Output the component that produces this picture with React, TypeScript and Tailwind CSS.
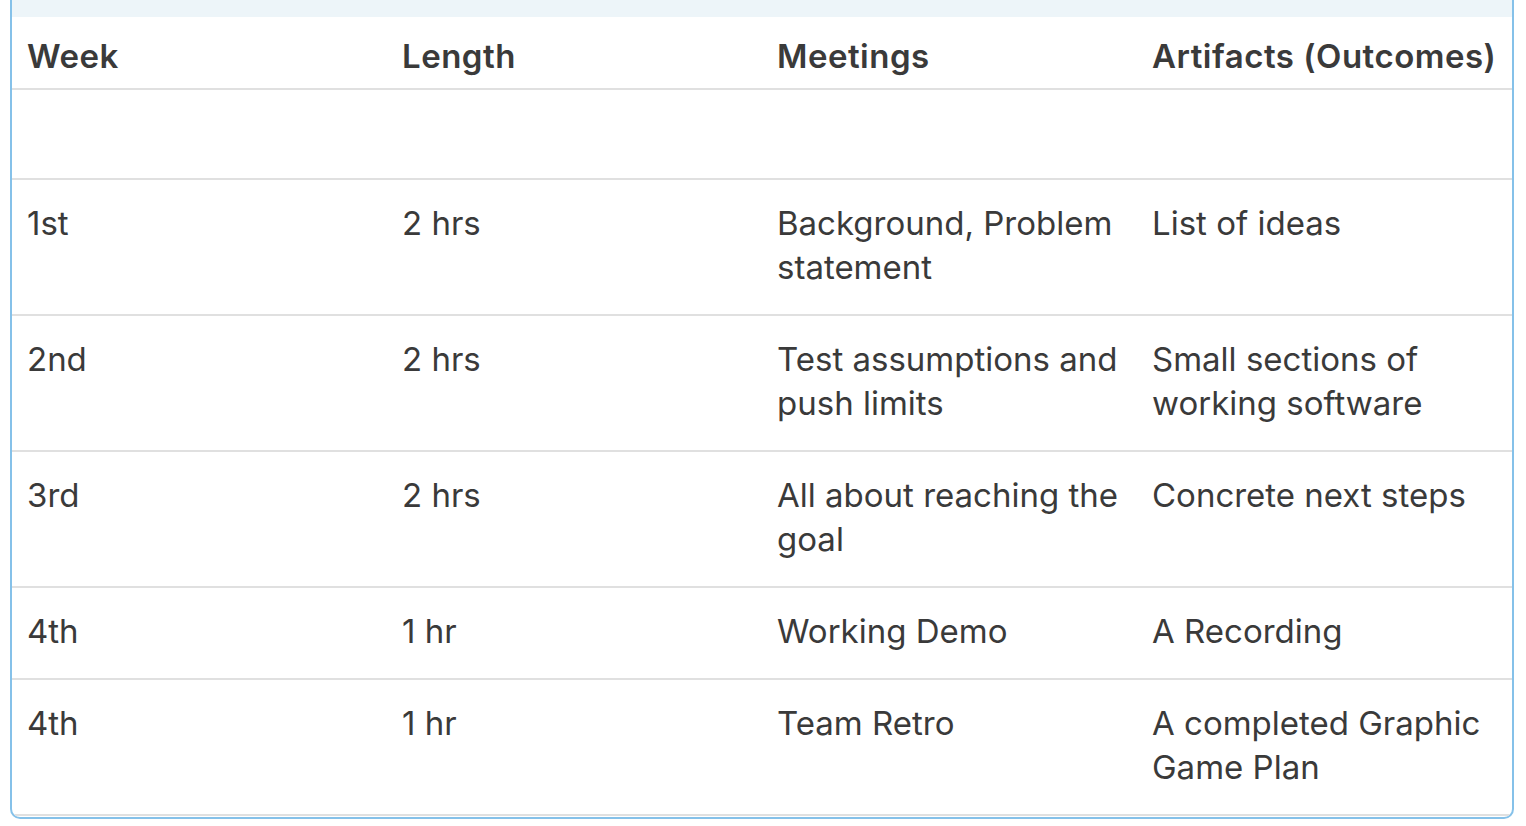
import React from "react";

const rows: [string, string, string, string][] = [
  ["1st", "2 hrs", "Background, Problem statement", "List of ideas"],
  ["2nd", "2 hrs", "Test assumptions and push limits", "Small sections of working software"],
  ["3rd", "2 hrs", "All about reaching the goal", "Concrete next steps"],
  ["4th", "1 hr", "Working Demo", "A Recording"],
  ["4th", "1 hr", "Team Retro", "A completed Graphic Game Plan"],
];

export default function App() {
  return (
    <div className="w-[1526px] h-[826px] bg-white" style={{ fontFamily: "Inter, 'Noto Sans', sans-serif" }}>
      <div className="ml-[10px] w-[1504px] border-x-2 border-b-2 border-[#85c1e9] rounded-b-[10px] pb-px overflow-hidden">
        <div className="h-[17px] bg-[#edf5f9]" />
        <table className="w-[1500px] table-fixed border-collapse text-[33px] leading-[44px] text-[#3a3a3a]">
          <colgroup>
            <col className="w-[375px]" />
            <col className="w-[375px]" />
            <col className="w-[375px]" />
            <col className="w-[375px]" />
          </colgroup>
          <thead>
            <tr className="border-b-2 border-[#e0e0e0]">
              {["Week", "Length", "Meetings", "Artifacts (Outcomes)"].map((h) => (
                <th key={h} className="text-left font-semibold tracking-[0.5px] text-[33px] pl-[15px] pr-2 pt-[17px] pb-[10px] whitespace-nowrap align-top">
                  {h}
                </th>
              ))}
            </tr>
          </thead>
          <tbody>
            <tr className="border-b-2 border-[#e0e0e0]">
              <td className="h-[90px]" colSpan={4}></td>
            </tr>
            {rows.map((r, i) => (
              <tr key={i} className="border-b-2 border-[#e0e0e0]">
                {r.map((c, j) => (
                  <td key={j} className="align-top pl-[15px] pr-4 pt-[21px] pb-[25px]">
                    {c}
                  </td>
                ))}
              </tr>
            ))}
          </tbody>
        </table>
      </div>
    </div>
  );
}
